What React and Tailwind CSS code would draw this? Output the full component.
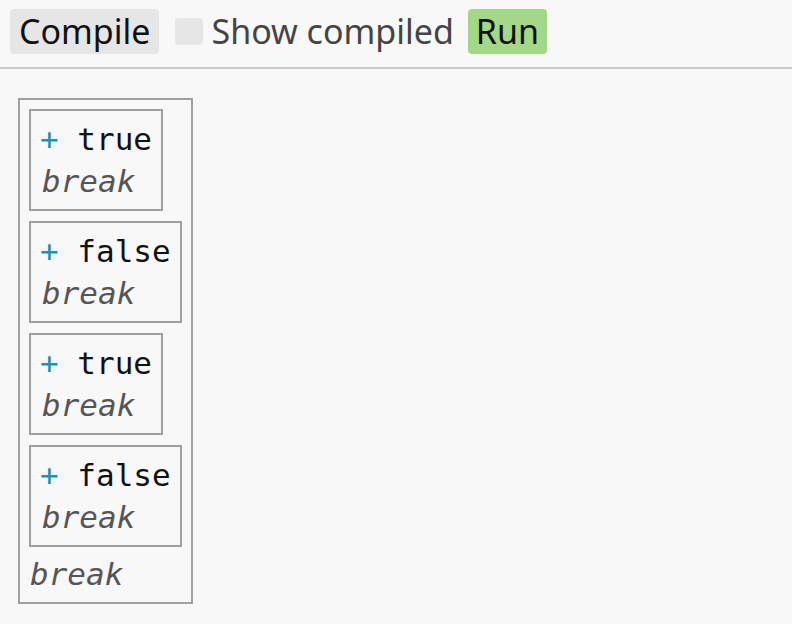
export default function App() {
  const items = ["true", "false", "true", "false"];
  return (
    <div className="min-h-[624px] w-full bg-[#f8f8f8]">
      <div className="flex items-center h-[69px] pt-[10px] pb-[14px] pl-[10px] font-['Noto_Sans',sans-serif] text-[34px] border-b-2 border-[#cccccc]">
        <div className="h-[45px] px-[9px] flex items-center rounded-[4px] bg-[#e6e6e6] text-[#111]">Compile</div>
        <div className="ml-[16px] w-[28px] h-[27px] rounded-[4px] bg-[#e6e6e6]"></div>
        <div className="ml-[8px] text-[#444]">Show compiled</div>
        <div className="ml-[14px] h-[45px] px-[8px] flex items-center rounded-[4px] bg-[#a3d886] text-[#111]">Run</div>
      </div>
      <div className="pt-[29px] pl-[18px] font-['DejaVu_Sans_Mono',monospace] text-[31px] leading-[42px]">
        <div className="inline-flex flex-col items-start border-2 border-[#a0a0a0] pt-[9px] pb-[7px] px-[9px]">
          <div className="flex flex-col items-start gap-[10px]">
            {items.map((w, i) => (
              <div key={i} className="border-2 border-[#a0a0a0] py-[7px] px-[9px]">
                <div className="whitespace-pre">
                  <span className="text-[#1f90b5]">+</span>
                  <span className="text-[#111]"> {w}</span>
                </div>
                <div className="italic text-[#555] pl-[2px]">break</div>
              </div>
            ))}
          </div>
          <div className="italic text-[#555] mt-[6px] pl-[1px]">break</div>
        </div>
      </div>
    </div>
  );
}
